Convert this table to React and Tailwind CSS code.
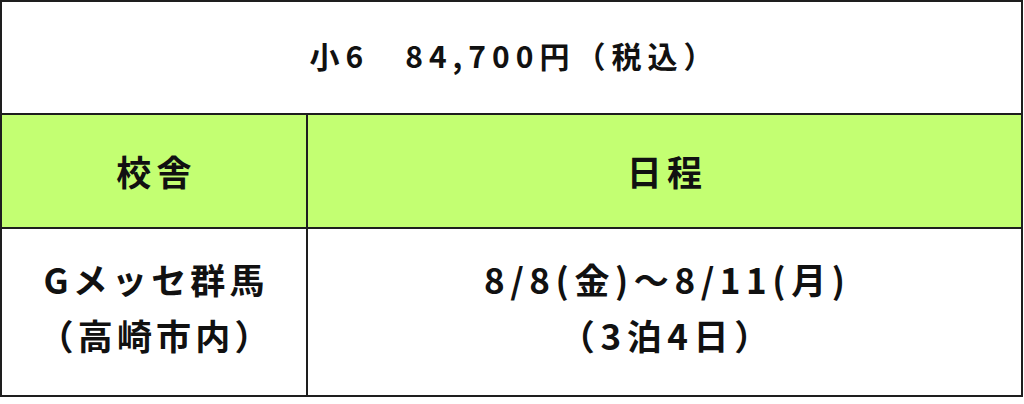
export default function App() {
  const font = { fontFamily: '"Noto Sans CJK JP", "Noto Sans", sans-serif' };
  return (
    <div className="bg-white w-[1024px] h-[404px]" style={font}>
      <div className="w-[1023px] border-2 border-[#1e1e1e] text-[#111] font-bold">
        <div className="h-[113px] flex items-center justify-center border-b-2 border-[#1e1e1e] text-[30px] tracking-[0.2em] pl-[0.2em] pb-[4px]">
          小6　84,700円（税込）
        </div>
        <div className="grid grid-cols-[306px_1fr] h-[114px] bg-[#c3ff72] border-b-2 border-[#1e1e1e] text-[35px] tracking-[0.15em]">
          <div className="flex items-center justify-center border-r-2 border-[#1e1e1e] pl-[0.15em]">校舎</div>
          <div className="flex items-center justify-center pl-[0.15em]">日程</div>
        </div>
        <div className="grid grid-cols-[306px_1fr] h-[166px] text-[35px] leading-[56px]">
          <div className="flex flex-col items-center justify-center border-r-2 border-[#1e1e1e] tracking-[0.12em] pl-[0.12em] pb-[10px]">
            <span>Gメッセ群馬</span>
            <span>（高崎市内）</span>
          </div>
          <div className="flex flex-col items-center justify-center tracking-[0.16em] pl-[0.16em] pb-[10px]">
            <span>8/8(金)～8/11(月)</span>
            <span>（3泊4日）</span>
          </div>
        </div>
      </div>
    </div>
  );
}
